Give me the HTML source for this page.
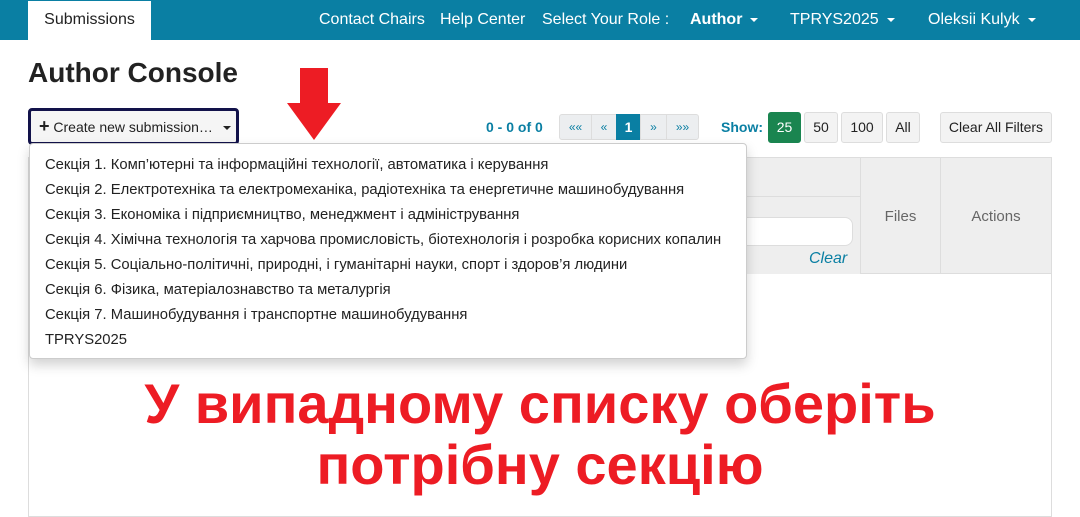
<!DOCTYPE html>
<html><head><meta charset="utf-8"><style>
*{box-sizing:border-box;margin:0;padding:0}
body{width:1080px;height:512px;overflow:hidden;background:#fff;font-family:"Liberation Sans",Arial,sans-serif;color:#222;position:relative}
.nav{position:absolute;left:0;top:0;width:1080px;height:40px;background:#0a7fa3}
.tab{position:absolute;left:28px;top:1px;width:123px;height:39px;background:#fff;color:#222;font-size:16px;line-height:38px;text-align:center}
.nv{position:absolute;top:0;line-height:40px;color:#fff;font-size:16px;white-space:nowrap}
.car{display:inline-block;width:0;height:0;border-left:4px solid transparent;border-right:4px solid transparent;border-top:4px solid #fff;vertical-align:middle;margin-left:8px}
h1{position:absolute;left:28px;top:57px;font-size:28px;font-weight:bold;color:#222}
.btn{position:absolute;left:28px;top:108px;width:211px;height:37px;border:3px solid #12124a;border-radius:4px;background:#f5f5f5;font-size:14px;line-height:31px;padding-left:8px;color:#222;white-space:nowrap}
.blue{color:#0a7fa3;font-weight:bold;font-size:14px;position:absolute}
.pg{position:absolute;top:114px;height:26px;border:1px solid #ddd;background:#eceef0;color:#0a7fa3;font-size:12px;line-height:24px;text-align:center}
.sb{position:absolute;top:112px;height:31px;border:1px solid #ddd;border-radius:3px;background:#f3f3f3;font-size:14px;line-height:29px;text-align:center;color:#222}
.tbl{position:absolute;left:28px;top:157px;width:1024px;height:360px;border:1px solid #ddd}
.th{position:absolute;top:157px;height:117px;background:#eee;border:1px solid #ddd;color:#666;font-size:15px;text-align:center;line-height:117px}
.dd{position:absolute;left:29px;top:143px;width:718px;height:216px;background:#fff;border:1px solid #ccc;border-radius:4px;box-shadow:0 6px 12px rgba(0,0,0,.18);padding-top:9px}
.dd div{font-size:14.8px;line-height:25px;padding-left:15px;color:#222;white-space:nowrap}
.red{position:absolute;left:0;width:1080px;text-align:center;color:#ed1c24;font-weight:bold;font-size:56px;line-height:60px}
</style></head><body>
<div class="nav"></div>
<div class="tab">Submissions</div>
<div class="nv" style="left:319px">Contact Chairs</div>
<div class="nv" style="left:440px">Help Center</div>
<div class="nv" style="left:542px">Select Your Role :</div>
<div class="nv" style="left:690px;font-weight:bold">Author<span class="car"></span></div>
<div class="nv" style="left:790px">TPRYS2025<span class="car"></span></div>
<div class="nv" style="left:928px">Oleksii Kulyk<span class="car"></span></div>
<h1>Author Console</h1>
<svg style="position:absolute;left:287px;top:68px" width="55" height="73"><polygon points="13,0 41,0 41,35 54,35 27,72 0,35 13,35" fill="#ed1c24"/></svg>
<div class="tbl"></div>
<div class="th" style="left:28px;width:832px;height:40px;border-right:none"></div>
<div style="position:absolute;left:28px;top:197px;width:832px;height:77px;background:#eee;border-left:1px solid #ddd"></div>
<div style="position:absolute;left:700px;top:217px;width:153px;height:29px;background:#fff;border:1px solid #ddd;border-radius:8px"></div>
<div style="position:absolute;left:809px;top:250px;color:#0a7fa3;font-style:italic;font-size:16px">Clear</div>
<div class="th" style="left:860px;width:81px">Files</div>
<div class="th" style="left:940px;width:112px">Actions</div>
<div class="btn"><b style="font-size:18px">+</b> Create new submission… <span class="car" style="border-top-color:#222;margin-left:6px"></span></div>
<div class="blue" style="left:486px;top:119px">0 - 0 of 0</div>
<div class="pg" style="left:559px;width:33px;border-radius:3px 0 0 3px">««</div>
<div class="pg" style="left:591px;width:26px">«</div>
<div class="pg" style="left:616px;width:25px;background:#0a7fa3;color:#fff;font-weight:bold;font-size:14px;border-color:#0a7fa3">1</div>
<div class="pg" style="left:640px;width:27px">»</div>
<div class="pg" style="left:666px;width:33px;border-radius:0 3px 3px 0">»»</div>
<div class="blue" style="left:721px;top:119px">Show:</div>
<div class="sb" style="left:768px;width:33px;background:#1a8550;color:#fff;border-color:#1a8550">25</div>
<div class="sb" style="left:804px;width:34px">50</div>
<div class="sb" style="left:841px;width:42px">100</div>
<div class="sb" style="left:886px;width:34px">All</div>
<div class="sb" style="left:940px;width:112px">Clear All Filters</div>
<div class="dd">
<div>Секція 1. Комп’ютерні та інформаційні технології, автоматика і керування</div>
<div>Секція 2. Електротехніка та електромеханіка, радіотехніка та енергетичне машинобудування</div>
<div>Секція 3. Економіка і підприємництво, менеджмент і адміністрування</div>
<div>Секція 4. Хімічна технологія та харчова промисловість, біотехнологія і розробка корисних копалин</div>
<div>Секція 5. Соціально-політичні, природні, і гуманітарні науки, спорт і здоров’я людини</div>
<div>Секція 6. Фізика, матеріалознавство та металургія</div>
<div>Секція 7. Машинобудування і транспортне машинобудування</div>
<div>TPRYS2025</div>
</div>
<div class="red" style="top:374px">У випадному списку оберіть</div>
<div class="red" style="top:435px">потрібну секцію</div>
</body></html>
